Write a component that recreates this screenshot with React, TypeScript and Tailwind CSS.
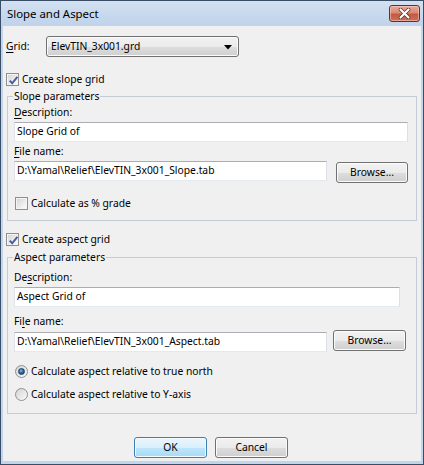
import type { ReactNode } from "react";

const btnFace =
  "border border-[#707070] rounded-[3px] bg-[linear-gradient(to_bottom,#f2f2f2_0%,#ebebeb_50%,#dddddd_51%,#cfcfcf_100%)] shadow-[inset_0_0_0_1px_#fbfbfb]";

function CheckBox({ checked }: { checked?: boolean }) {
  return (
    <span className="relative flex h-[13px] w-[13px] shrink-0 items-center justify-center border border-[#8e8f8f] bg-[#f4f4f4]">
      <span className="h-[9px] w-[9px] bg-[linear-gradient(135deg,#d6d6d6_0%,#e8e8e8_50%,#fbfbfb_100%)]" />
      {checked && (
        <svg className="absolute left-[1px] top-[1px]" width="11" height="11" viewBox="0 0 11 11">
          <path d="M1.8 5.6 L4.2 8.3 L9.4 1.8" fill="none" stroke="#4a5c9c" strokeWidth="2" />
        </svg>
      )}
    </span>
  );
}

function Radio({ checked }: { checked?: boolean }) {
  return (
    <span className="flex h-[13px] w-[13px] shrink-0 items-center justify-center rounded-full border border-[#8e8f8f] bg-[linear-gradient(135deg,#d4d4d4,#fafafa)]">
      {checked && (
        <span className="h-[7px] w-[7px] rounded-full border border-[#1d3f63] bg-[radial-gradient(circle_at_40%_35%,#8cc0e8_0%,#2b6aa3_45%,#0f3a64_100%)]" />
      )}
    </span>
  );
}

function Button({ children, primary, className }: { children: ReactNode; primary?: boolean; className?: string }) {
  return (
    <div
      className={
        (primary
          ? "border border-[#3c7fb1] rounded-[3px] bg-[linear-gradient(to_bottom,#eaf6fd_0%,#d9f0fc_50%,#bee6fd_51%,#a7d9f5_100%)] shadow-[inset_0_0_0_1px_#f4fbff]"
          : btnFace) +
        " flex items-center justify-center " +
        (className ?? "")
      }
    >
      {children}
    </div>
  );
}

function TextBox({ value, className }: { value: string; className?: string }) {
  return (
    <div
      className={
        "flex h-[20px] items-center border border-[#abadb3] border-b-[#e3e9ef] border-l-[#e2e3ea] border-r-[#dbdfe6] bg-white pl-[2px] " +
        (className ?? "")
      }
    >
      {value}
    </div>
  );
}

function Row({ children, className }: { children: ReactNode; className?: string }) {
  return <div className={"flex h-[13px] items-center gap-[3px] leading-[13px] " + (className ?? "")}>{children}</div>;
}

export default function App() {
  return (
    <div className="flex h-[465px] w-[424px] flex-col border border-[#3a4d66] bg-[#c3d5ea] font-['Noto_Sans',sans-serif] text-[10.3px] text-black">
      {/* title bar */}
      <div className="flex h-[25px] shrink-0 items-center justify-between bg-[linear-gradient(to_bottom,#d3e1f1_0%,#c6d8ed_60%,#bfd3ea_100%)] pl-[6px] pr-[3px]">
        <span className="text-[11.4px] leading-none">Slope and Aspect</span>
        <div className="flex h-[17px] w-[31px] items-center justify-center rounded-[3px] border border-[#6d2d27] bg-[linear-gradient(to_bottom,#e9a897_0%,#d98a76_45%,#c35a43_55%,#cd7058_100%)] shadow-[inset_0_0_0_1px_rgba(255,220,210,0.5)]">
          <svg width="13" height="11" viewBox="0 0 13 11">
            <path d="M2.5 1.5 L10.5 9.5 M10.5 1.5 L2.5 9.5" stroke="#5a2a24" strokeWidth="3.6" strokeLinecap="round" />
            <path d="M2.5 1.5 L10.5 9.5 M10.5 1.5 L2.5 9.5" stroke="#ffffff" strokeWidth="2.2" strokeLinecap="round" />
          </svg>
        </div>
      </div>

      {/* client area */}
      <div className="mx-[2px] mb-[3px] flex flex-1 flex-col bg-[#f0f0f0] pl-[3px] pr-[4px]">
        <div className="mt-[10px] flex h-[21px] items-center">
          <span className="w-[40px]">
            <span className="underline underline-offset-[2px]">G</span>rid:
          </span>
          <div className={btnFace + " relative flex h-[21px] w-[193px] items-center pl-[4px]"}>
            ElevTIN_3x001.grd
            <svg className="absolute right-[6px] top-[8px]" width="8" height="5" viewBox="0 0 8 5">
              <path d="M0 0 H8 L4 4.5 Z" fill="#000" />
            </svg>
          </div>
        </div>

        <Row className="mt-[16px]">
          <CheckBox checked />
          <span>Create slope grid</span>
        </Row>

        <fieldset className="ml-[1px] mt-[4px] border border-[#c5ccd3] pb-[10px] pl-[6px] pr-[8px]">
          <legend className="-ml-[1px] px-[1px] leading-[13px]">Slope parameters</legend>
          <div className="mt-[3px] leading-[13px]">
            <span className="underline underline-offset-[2px]">D</span>escription:
          </div>
          <TextBox value="Slope Grid of" className="mt-[3px]" />
          <div className="mt-[3px] leading-[13px]">
            <span className="underline underline-offset-[2px]">F</span>ile name:
          </div>
          <div className="mt-[3px] flex items-start">
            <TextBox value="D:\Yamal\Relief\ElevTIN_3x001_Slope.tab" className="w-[313px]" />
            <Button className="ml-[9px] mt-[1px] h-[21px] w-[72px]">Browse...</Button>
          </div>
          <Row className="mt-[14px] pl-[1px]">
            <CheckBox />
            <span>Calculate as % grade</span>
          </Row>
        </fieldset>

        <Row className="mt-[12px]">
          <CheckBox checked />
          <span>Create aspect grid</span>
        </Row>

        <fieldset className="ml-[1px] mt-[5px] border border-[#c5ccd3] pb-[12px] pl-[6px] pr-[8px]">
          <legend className="-ml-[1px] px-[1px] leading-[13px]">Aspect parameters</legend>
          <div className="mt-[7px] leading-[13px]">
            De<span className="underline underline-offset-[2px]">s</span>cription:
          </div>
          <TextBox value="Aspect Grid of" className="mr-[8px] mt-[3px]" />
          <div className="mt-[8px] leading-[13px]">
            Fi<span className="underline underline-offset-[2px]">l</span>e name:
          </div>
          <div className="mt-[2px] flex items-start">
            <TextBox value="D:\Yamal\Relief\ElevTIN_3x001_Aspect.tab" className="mt-[2px] w-[313px]" />
            <Button className="ml-[6px] h-[21px] w-[73px]">Browse...</Button>
          </div>
          <Row className="mt-[13px] pl-[1px]">
            <Radio checked />
            <span>Calculate aspect relative to true north</span>
          </Row>
          <Row className="mt-[10px] pl-[1px]">
            <Radio />
            <span>Calculate aspect relative to Y-axis</span>
          </Row>
        </fieldset>

        <div className="mt-[23px] flex justify-center gap-[8px] pr-[1px]">
          <Button primary className="h-[21px] w-[73px]">
            OK
          </Button>
          <Button className="h-[21px] w-[73px]">Cancel</Button>
        </div>
      </div>
    </div>
  );
}
